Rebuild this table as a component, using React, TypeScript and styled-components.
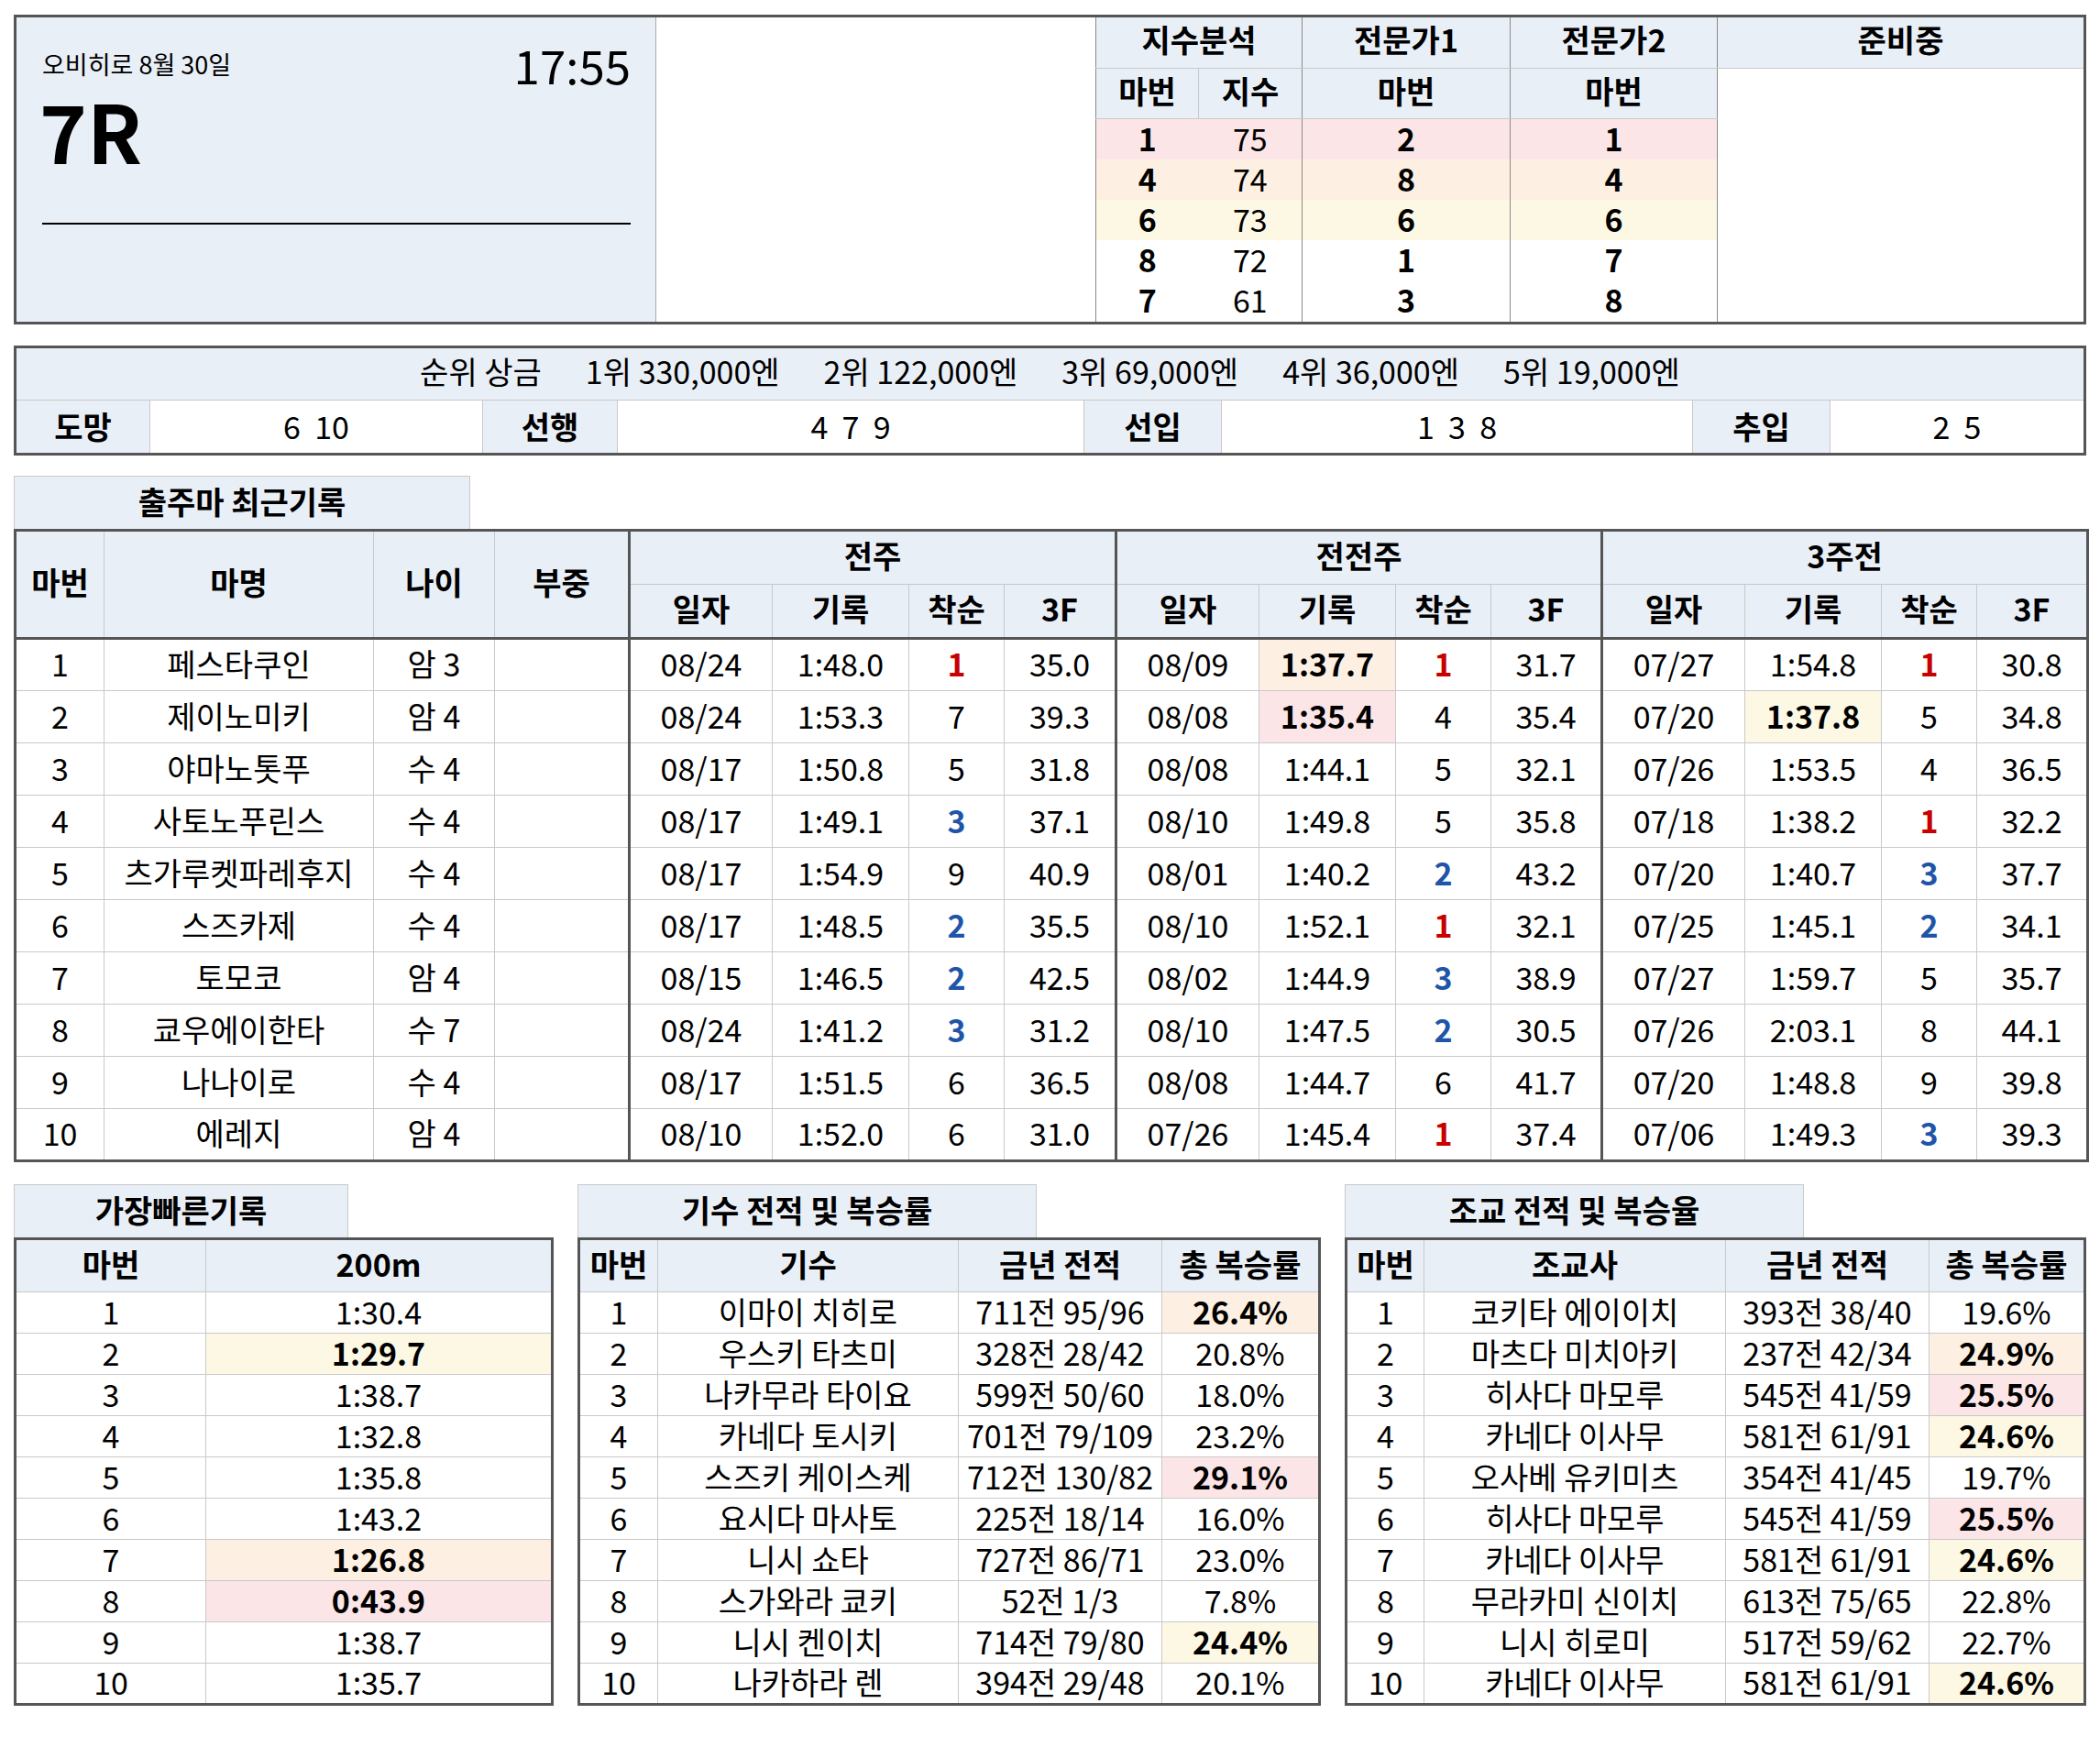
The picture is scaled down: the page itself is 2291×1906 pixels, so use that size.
import React from "react";
import styled, { createGlobalStyle, css } from "styled-components";

const C = {
  head: "#e9eff7",
  line: "#c9c9c9",
  group: "#8a8a8a",
  dark: "#555",
  pink: "#fce5e7",
  orange: "#fdf0e2",
  yellow: "#fdf8e4",
  red: "#c80000",
  blue: "#1f55a8",
};

type Tone = "pink" | "orange" | "yellow";
const toneBg: Record<Tone, string> = {
  pink: C.pink,
  orange: C.orange,
  yellow: C.yellow,
};

const GlobalStyle = createGlobalStyle`
  body {
    margin: 0;
    background: #fff;
    font-family: "Noto Sans CJK KR", "Noto Sans", sans-serif;
    color: #000;
  }
  table {
    font-size: inherit;
    line-height: inherit;
  }
`;

const Page = styled.div`
  width: 2261px;
  padding: 16px 15px 44px;
  display: flex;
  flex-direction: column;
  font-size: 34px;
  line-height: 1.2;
`;

/* ---------- race header ---------- */

const TopBox = styled.div`
  height: 338px;
  box-sizing: border-box;
  border: 3px solid ${C.dark};
  display: flex;
  overflow: hidden;
`;

const RacePanel = styled.div`
  width: 698px;
  box-sizing: border-box;
  background: ${C.head};
  border-right: 1px solid #aaa;
  padding: 26px 27px 0 28px;
  display: flex;
  flex-direction: column;
`;

const RaceMeta = styled.div`
  height: 50px;
  display: flex;
  justify-content: space-between;
  align-items: center;
`;

const Venue = styled.span`
  font-size: 27px;
`;

const StartTime = styled.span`
  font-size: 51px;
  line-height: 1;
`;

const RaceNo = styled.div`
  margin: 6px 0 0 -3px;
  font-size: 88px;
  font-weight: 700;
  line-height: 80px;
`;

const Rule = styled.div`
  margin-top: 62px;
  height: 2px;
  background: #000;
`;

const BlankPanel = styled.div`
  width: 479px;
`;

const IndexTable = styled.table`
  flex: 1;
  height: 100%;
  border-collapse: collapse;
  table-layout: fixed;
`;

const IndexRow = styled.tr<{ $h: number }>`
  height: ${(p) => p.$h}px;
`;

const IndexHead = styled.th<{ $light?: boolean }>`
  background: ${C.head};
  font-weight: 700;
  padding: 0 0 6px;
  border-bottom: 1px solid ${C.line};
  border-left: 1px solid ${(p) => (p.$light ? C.line : C.group)};
`;

const IndexCell = styled.td<{ $tone?: Tone; $bold?: boolean; $left?: boolean }>`
  text-align: center;
  padding: 0 0 2px;
  font-weight: ${(p) => (p.$bold ? 700 : 400)};
  background: ${(p) => (p.$tone ? toneBg[p.$tone] : "#fff")};
  ${(p) =>
    p.$left &&
    css`
      border-left: 1px solid ${C.group};
    `}
`;

const Pending = styled.td`
  background: #fff;
  border-left: 1px solid ${C.group};
`;

/* ---------- prize / running style ---------- */

const PrizeBox = styled.div`
  margin-top: 23px;
  height: 120px;
  box-sizing: border-box;
  border: 3px solid ${C.dark};
  display: flex;
  flex-direction: column;
`;

const PrizeLine = styled.div`
  height: 57px;
  box-sizing: border-box;
  padding-bottom: 5px;
  background: ${C.head};
  border-bottom: 1px solid ${C.line};
  display: flex;
  justify-content: center;
  align-items: center;
  gap: 48px;
`;

const StyleRow = styled.div`
  flex: 1;
  display: grid;
  grid-template-columns: 146px 363px 147px 509px 150px 514px 150px 1fr;
`;

const StyleLabel = styled.div`
  background: ${C.head};
  font-weight: 700;
  display: flex;
  align-items: center;
  justify-content: center;
  border-right: 1px solid ${C.line};
`;

const StyleValue = styled.div`
  display: flex;
  align-items: center;
  justify-content: center;
  white-space: pre;
  border-right: 1px solid ${C.line};
  &:last-child {
    border-right: none;
  }
`;

/* ---------- record tables ---------- */

const Tab = styled.div<{ $w: number }>`
  width: ${(p) => p.$w}px;
  height: 58px;
  box-sizing: border-box;
  padding-bottom: 3px;
  background: ${C.head};
  border: 1px solid ${C.line};
  border-bottom: none;
  display: flex;
  align-items: center;
  justify-content: center;
  font-weight: 700;
`;

const Grid = styled.table<{ $w: number }>`
  width: ${(p) => p.$w}px;
  border-collapse: collapse;
  table-layout: fixed;
  border: 3px solid ${C.dark};
`;

const Row = styled.tr<{ $h: number }>`
  height: ${(p) => p.$h}px;
`;

const Head = styled.th<{ $thick?: boolean; $under?: boolean }>`
  background: ${C.head};
  font-weight: 700;
  padding: 0 0 4px;
  white-space: nowrap;
  border: 1px solid ${C.line};
  ${(p) =>
    p.$thick &&
    css`
      border-left: 3px solid ${C.dark};
    `}
  ${(p) =>
    p.$under &&
    css`
      border-bottom: 3px solid ${C.dark};
    `}
`;

const Cell = styled.td<{ $tone?: Tone; $bold?: boolean; $color?: string; $thick?: boolean }>`
  text-align: center;
  padding: 0 0 2px;
  white-space: nowrap;
  border: 1px solid ${C.line};
  background: ${(p) => (p.$tone ? toneBg[p.$tone] : "#fff")};
  font-weight: ${(p) => (p.$bold ? 700 : 400)};
  color: ${(p) => p.$color ?? "#000"};
  ${(p) =>
    p.$thick &&
    css`
      border-left: 3px solid ${C.dark};
    `}
`;

const Section = styled.div`
  display: flex;
  flex-direction: column;
`;

const RecentSection = styled(Section)`
  margin-top: 22px;
`;

const BottomRow = styled.div`
  margin-top: 24px;
  display: flex;
  justify-content: space-between;
`;

/* ---------- data ---------- */

const indexRows: { tone?: Tone; v: [string, string, string, string] }[] = [
  { tone: "pink", v: ["1", "75", "2", "1"] },
  { tone: "orange", v: ["4", "74", "8", "4"] },
  { tone: "yellow", v: ["6", "73", "6", "6"] },
  { v: ["8", "72", "1", "7"] },
  { v: ["7", "61", "3", "8"] },
];

type Race = { d: string; t: string; r: string; f: string; tone?: Tone };
type Horse = { name: string; age: string; races: Race[] };

const r = (d: string, t: string, rk: string, f: string, tone?: Tone): Race => ({
  d,
  t,
  r: rk,
  f,
  tone,
});

const horses: Horse[] = [
  { name: "페스타쿠인", age: "암 3", races: [r("08/24", "1:48.0", "1", "35.0"), r("08/09", "1:37.7", "1", "31.7", "orange"), r("07/27", "1:54.8", "1", "30.8")] },
  { name: "제이노미키", age: "암 4", races: [r("08/24", "1:53.3", "7", "39.3"), r("08/08", "1:35.4", "4", "35.4", "pink"), r("07/20", "1:37.8", "5", "34.8", "yellow")] },
  { name: "야마노톳푸", age: "수 4", races: [r("08/17", "1:50.8", "5", "31.8"), r("08/08", "1:44.1", "5", "32.1"), r("07/26", "1:53.5", "4", "36.5")] },
  { name: "사토노푸린스", age: "수 4", races: [r("08/17", "1:49.1", "3", "37.1"), r("08/10", "1:49.8", "5", "35.8"), r("07/18", "1:38.2", "1", "32.2")] },
  { name: "츠가루켓파레후지", age: "수 4", races: [r("08/17", "1:54.9", "9", "40.9"), r("08/01", "1:40.2", "2", "43.2"), r("07/20", "1:40.7", "3", "37.7")] },
  { name: "스즈카제", age: "수 4", races: [r("08/17", "1:48.5", "2", "35.5"), r("08/10", "1:52.1", "1", "32.1"), r("07/25", "1:45.1", "2", "34.1")] },
  { name: "토모코", age: "암 4", races: [r("08/15", "1:46.5", "2", "42.5"), r("08/02", "1:44.9", "3", "38.9"), r("07/27", "1:59.7", "5", "35.7")] },
  { name: "쿄우에이한타", age: "수 7", races: [r("08/24", "1:41.2", "3", "31.2"), r("08/10", "1:47.5", "2", "30.5"), r("07/26", "2:03.1", "8", "44.1")] },
  { name: "나나이로", age: "수 4", races: [r("08/17", "1:51.5", "6", "36.5"), r("08/08", "1:44.7", "6", "41.7"), r("07/20", "1:48.8", "9", "39.8")] },
  { name: "에레지", age: "암 4", races: [r("08/10", "1:52.0", "6", "31.0"), r("07/26", "1:45.4", "1", "37.4"), r("07/06", "1:49.3", "3", "39.3")] },
];

const rankColor = (rk: string) => (rk === "1" ? C.red : rk === "2" || rk === "3" ? C.blue : undefined);

const fastest: { t: string; tone?: Tone }[] = [
  { t: "1:30.4" },
  { t: "1:29.7", tone: "yellow" },
  { t: "1:38.7" },
  { t: "1:32.8" },
  { t: "1:35.8" },
  { t: "1:43.2" },
  { t: "1:26.8", tone: "orange" },
  { t: "0:43.9", tone: "pink" },
  { t: "1:38.7" },
  { t: "1:35.7" },
];

type Person = { name: string; rec: string; pct: string; tone?: Tone };

const jockeys: Person[] = [
  { name: "이마이 치히로", rec: "711전 95/96", pct: "26.4%", tone: "orange" },
  { name: "우스키 타츠미", rec: "328전 28/42", pct: "20.8%" },
  { name: "나카무라 타이요", rec: "599전 50/60", pct: "18.0%" },
  { name: "카네다 토시키", rec: "701전 79/109", pct: "23.2%" },
  { name: "스즈키 케이스케", rec: "712전 130/82", pct: "29.1%", tone: "pink" },
  { name: "요시다 마사토", rec: "225전 18/14", pct: "16.0%" },
  { name: "니시 쇼타", rec: "727전 86/71", pct: "23.0%" },
  { name: "스가와라 쿄키", rec: "52전 1/3", pct: "7.8%" },
  { name: "니시 켄이치", rec: "714전 79/80", pct: "24.4%", tone: "yellow" },
  { name: "나카하라 렌", rec: "394전 29/48", pct: "20.1%" },
];

const trainers: Person[] = [
  { name: "코키타 에이이치", rec: "393전 38/40", pct: "19.6%" },
  { name: "마츠다 미치아키", rec: "237전 42/34", pct: "24.9%", tone: "orange" },
  { name: "히사다 마모루", rec: "545전 41/59", pct: "25.5%", tone: "pink" },
  { name: "카네다 이사무", rec: "581전 61/91", pct: "24.6%", tone: "yellow" },
  { name: "오사베 유키미츠", rec: "354전 41/45", pct: "19.7%" },
  { name: "히사다 마모루", rec: "545전 41/59", pct: "25.5%", tone: "pink" },
  { name: "카네다 이사무", rec: "581전 61/91", pct: "24.6%", tone: "yellow" },
  { name: "무라카미 신이치", rec: "613전 75/65", pct: "22.8%" },
  { name: "니시 히로미", rec: "517전 59/62", pct: "22.7%" },
  { name: "카네다 이사무", rec: "581전 61/91", pct: "24.6%", tone: "yellow" },
];

const prizes = ["순위 상금", "1위 330,000엔", "2위 122,000엔", "3위 69,000엔", "4위 36,000엔", "5위 19,000엔"];

const groups = ["전주", "전전주", "3주전"];

const PersonTable = ({ title, who, rows, cols }: { title: string; who: string; rows: Person[]; cols: number[] }) => (
  <Section>
    <Tab $w={501}>{title}</Tab>
    <Grid $w={cols.reduce((a, b) => a + b, 0)}>
      <colgroup>
        {cols.map((w, i) => (
          <col key={i} style={{ width: w }} />
        ))}
      </colgroup>
      <tbody>
        <Row $h={58}>
          <Head>마번</Head>
          <Head>{who}</Head>
          <Head>금년 전적</Head>
          <Head>총 복승률</Head>
        </Row>
        {rows.map((p, i) => (
          <Row $h={45} key={i}>
            <Cell>{i + 1}</Cell>
            <Cell>{p.name}</Cell>
            <Cell>{p.rec}</Cell>
            <Cell $tone={p.tone} $bold={!!p.tone}>
              {p.pct}
            </Cell>
          </Row>
        ))}
      </tbody>
    </Grid>
  </Section>
);

const recentCols = [97, 294, 132, 147, 156, 149, 104, 122, 156, 149, 104, 121, 156, 149, 104, 121];

export default function App() {
  return (
    <>
      <GlobalStyle />
      <Page>
        <TopBox>
          <RacePanel>
            <RaceMeta>
              <Venue>오비히로 8월 30일</Venue>
              <StartTime>17:55</StartTime>
            </RaceMeta>
            <RaceNo>7R</RaceNo>
            <Rule />
          </RacePanel>
          <BlankPanel />
          <IndexTable>
            <colgroup>
              <col style={{ width: 112 }} />
              <col style={{ width: 113 }} />
              <col style={{ width: 227 }} />
              <col style={{ width: 226 }} />
              <col />
            </colgroup>
            <tbody>
              <IndexRow $h={55}>
                <IndexHead colSpan={2}>지수분석</IndexHead>
                <IndexHead>전문가1</IndexHead>
                <IndexHead>전문가2</IndexHead>
                <IndexHead>준비중</IndexHead>
              </IndexRow>
              <IndexRow $h={55}>
                <IndexHead>마번</IndexHead>
                <IndexHead $light>지수</IndexHead>
                <IndexHead>마번</IndexHead>
                <IndexHead>마번</IndexHead>
                <Pending rowSpan={6} />
              </IndexRow>
              {indexRows.map((row, i) => (
                <IndexRow $h={44} key={i}>
                  <IndexCell $tone={row.tone} $bold $left>
                    {row.v[0]}
                  </IndexCell>
                  <IndexCell $tone={row.tone}>{row.v[1]}</IndexCell>
                  <IndexCell $tone={row.tone} $bold $left>
                    {row.v[2]}
                  </IndexCell>
                  <IndexCell $tone={row.tone} $bold $left>
                    {row.v[3]}
                  </IndexCell>
                </IndexRow>
              ))}
            </tbody>
          </IndexTable>
        </TopBox>

        <PrizeBox>
          <PrizeLine>
            {prizes.map((p) => (
              <span key={p}>{p}</span>
            ))}
          </PrizeLine>
          <StyleRow>
            <StyleLabel>도망</StyleLabel>
            <StyleValue>{"6  10"}</StyleValue>
            <StyleLabel>선행</StyleLabel>
            <StyleValue>{"4  7  9"}</StyleValue>
            <StyleLabel>선입</StyleLabel>
            <StyleValue>{"1  3  8"}</StyleValue>
            <StyleLabel>추입</StyleLabel>
            <StyleValue>{"2  5"}</StyleValue>
          </StyleRow>
        </PrizeBox>

        <RecentSection>
          <Tab $w={498}>출주마 최근기록</Tab>
          <Grid $w={2261}>
            <colgroup>
              {recentCols.map((w, i) => (
                <col key={i} style={{ width: w }} />
              ))}
            </colgroup>
            <tbody>
              <Row $h={59}>
                <Head rowSpan={2} $under>
                  마번
                </Head>
                <Head rowSpan={2} $under>
                  마명
                </Head>
                <Head rowSpan={2} $under>
                  나이
                </Head>
                <Head rowSpan={2} $under>
                  부중
                </Head>
                {groups.map((g) => (
                  <Head key={g} colSpan={4} $thick>
                    {g}
                  </Head>
                ))}
              </Row>
              <Row $h={59}>
                {groups.map((g) =>
                  ["일자", "기록", "착순", "3F"].map((h, j) => (
                    <Head key={g + h} $under $thick={j === 0}>
                      {h}
                    </Head>
                  ))
                )}
              </Row>
              {horses.map((h, i) => (
                <Row $h={57} key={h.name}>
                  <Cell>{i + 1}</Cell>
                  <Cell>{h.name}</Cell>
                  <Cell>{h.age}</Cell>
                  <Cell />
                  {h.races.map((rc, j) => (
                    <React.Fragment key={j}>
                      <Cell $thick>{rc.d}</Cell>
                      <Cell $tone={rc.tone} $bold={!!rc.tone}>
                        {rc.t}
                      </Cell>
                      <Cell $color={rankColor(rc.r)} $bold={!!rankColor(rc.r)}>
                        {rc.r}
                      </Cell>
                      <Cell>{rc.f}</Cell>
                    </React.Fragment>
                  ))}
                </Row>
              ))}
            </tbody>
          </Grid>
        </RecentSection>

        <BottomRow>
          <Section>
            <Tab $w={365}>가장빠른기록</Tab>
            <Grid $w={586}>
              <colgroup>
                <col style={{ width: 208 }} />
                <col style={{ width: 378 }} />
              </colgroup>
              <tbody>
                <Row $h={58}>
                  <Head>마번</Head>
                  <Head>200m</Head>
                </Row>
                {fastest.map((f, i) => (
                  <Row $h={45} key={i}>
                    <Cell>{i + 1}</Cell>
                    <Cell $tone={f.tone} $bold={!!f.tone}>
                      {f.t}
                    </Cell>
                  </Row>
                ))}
              </tbody>
            </Grid>
          </Section>
          <PersonTable title="기수 전적 및 복승률" who="기수" rows={jockeys} cols={[86, 328, 222, 172]} />
          <PersonTable title="조교 전적 및 복승율" who="조교사" rows={trainers} cols={[85, 329, 222, 170]} />
        </BottomRow>
      </Page>
    </>
  );
}
